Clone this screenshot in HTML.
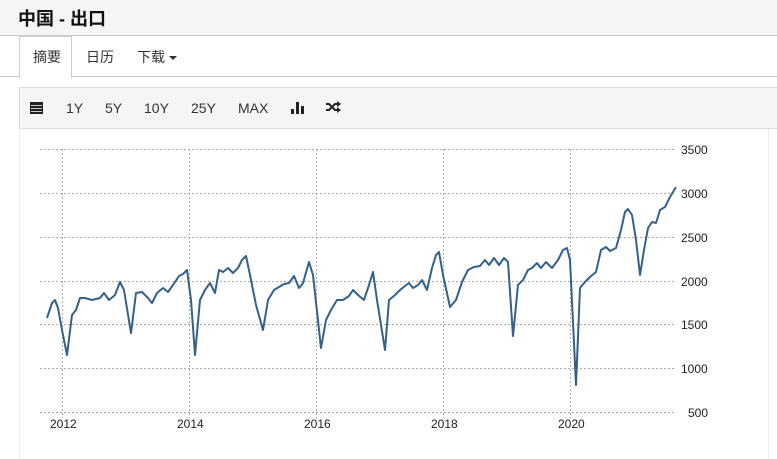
<!DOCTYPE html>
<html><head><meta charset="utf-8"><style>
body{margin:0;width:777px;height:449px;overflow:hidden;background:#fff;font-family:"Liberation Sans","Noto Sans CJK SC",sans-serif;position:relative}
.hdr{position:absolute;left:0;top:0;width:777px;height:35px;background:#f5f5f5;border-bottom:1px solid #ccc}
.hdr span{position:absolute;left:18px;top:5px;font-size:18px;font-weight:bold;color:#111}
.tabs{position:absolute;left:0;top:36px;width:777px;height:40px;border-bottom:1px solid #ccc}
.tab{position:absolute;top:10px;font-size:14px;color:#333}
.act{position:absolute;left:19px;top:36px;width:51px;height:41px;border:1px solid #ccc;border-bottom:none;background:#fff}
.tb{position:absolute;left:19px;top:87px;width:770px;height:40px;background:#f5f5f5;border:1px solid #ddd}
.tb span{position:absolute;top:12px;font-size:14px;color:#333}
.chart{position:absolute;left:19px;top:129px;width:748px;height:330px;border-left:1px solid #eee;border-right:1px solid #eee}
</style></head><body>
<div class="hdr"><span>中国 - 出口</span></div>
<div class="tabs"></div>
<div class="act"></div>
<span class="tab" style="left:33px;top:47px;position:absolute">摘要</span>
<span class="tab" style="left:86px;top:47px;position:absolute">日历</span>
<span class="tab" style="left:137px;top:47px;position:absolute">下载 <span style="display:inline-block;width:0;height:0;border-left:4px solid transparent;border-right:4px solid transparent;border-top:4px solid #333;vertical-align:middle"></span></span>
<div class="tb">
<svg style="position:absolute;left:10px;top:13px" width="13" height="13" viewBox="0 0 13 13"><rect x="0" y="1" width="13" height="12" fill="#222"/><g fill="#f5f5f5"><rect x="1" y="4" width="11" height="0.8"/><rect x="1" y="7" width="11" height="0.8"/><rect x="1" y="10" width="11" height="0.8"/></g></svg>
<span style="left:46px">1Y</span><span style="left:85px">5Y</span><span style="left:124px">10Y</span><span style="left:171px">25Y</span><span style="left:218px">MAX</span>
<svg style="position:absolute;left:271px;top:13px" width="14" height="13"><rect x="0" y="8" width="3" height="5" fill="#222"/><rect x="5" y="1" width="3" height="12" fill="#222"/><rect x="10" y="5" width="3" height="8" fill="#222"/></svg>
<svg style="position:absolute;left:306px;top:13px" width="15" height="12" viewBox="0 0 15 12"><path d="M0 3h3l6 6h3M0 9h3l6-6h3" stroke="#222" stroke-width="2" fill="none"/><path d="M11 0l4 3-4 3zM11 6l4 3-4 3z" fill="#222"/></svg>
</div>
<div class="chart"></div>
<svg style="position:absolute;left:0;top:0" width="777" height="449">
<g stroke="#aaa" stroke-width="1" stroke-dasharray="2,2">
<line x1="40" x2="676" y1="149.5" y2="149.5"/><line x1="40" x2="676" y1="193.5" y2="193.5"/><line x1="40" x2="676" y1="237.5" y2="237.5"/><line x1="40" x2="676" y1="281.5" y2="281.5"/><line x1="40" x2="676" y1="324.5" y2="324.5"/><line x1="40" x2="676" y1="368.5" y2="368.5"/><line x1="40" x2="676" y1="412.5" y2="412.5"/>
<line x1="62.5" x2="62.5" y1="149" y2="418"/><line x1="189.5" x2="189.5" y1="149" y2="418"/><line x1="316.5" x2="316.5" y1="149" y2="418"/><line x1="443.5" x2="443.5" y1="149" y2="418"/><line x1="570.5" x2="570.5" y1="149" y2="418"/>
</g>
<g font-size="12" fill="#222" font-family="Liberation Sans,sans-serif">
<text x="681" y="154">3500</text><text x="681" y="198">3000</text><text x="681" y="242">2500</text><text x="681" y="286">2000</text><text x="681" y="329">1500</text><text x="681" y="373">1000</text><text x="688" y="417">500</text>
<text x="50" y="428">2012</text><text x="177" y="428">2014</text><text x="304" y="428">2016</text><text x="431" y="428">2018</text><text x="558" y="428">2020</text>
</g>
<polyline fill="none" stroke="#35608a" stroke-width="2" stroke-linejoin="round" points="47,318 52,303 55,300 58,308 62,330 67,355 72,315 76,310 80,298 85,298 92,300 100,298 104,293 109,300 115,295 120,282 124,290 131,333 136,293 142,292 148,298 152,303 157,293 163,288 168,292 173,285 179,276 183,274 187,270 191,300 195,355 200,300 205,290 210,283 215,293 219,270 223,272 228,268 233,273 238,268 242,260 246,256 250,275 256,305 263,330 268,300 274,290 279,287 284,284 289,283 294,276 299,288 303,283 309,262 313,275 321,348 326,320 331,310 337,300 343,300 349,296 353,290 358,295 364,300 369,285 373,272 377,300 385,350 389,300 395,295 400,290 405,286 409,283 413,288 418,285 422,280 427,290 432,268 436,255 439,252 443,275 450,307 456,300 462,282 468,270 474,267 480,266 485,260 489,265 494,258 499,265 504,258 508,262 513,336 518,285 523,280 528,270 532,268 537,263 541,268 546,262 552,268 558,260 563,250 567,248 570,260 576,385 580,288 585,282 590,277 596,272 601,250 606,247 610,251 616,248 621,230 625,212 628,209 632,215 636,240 640,275 644,250 648,228 652,222 656,223 660,210 665,207 670,197 676,187"/>
</svg>
</body></html>
